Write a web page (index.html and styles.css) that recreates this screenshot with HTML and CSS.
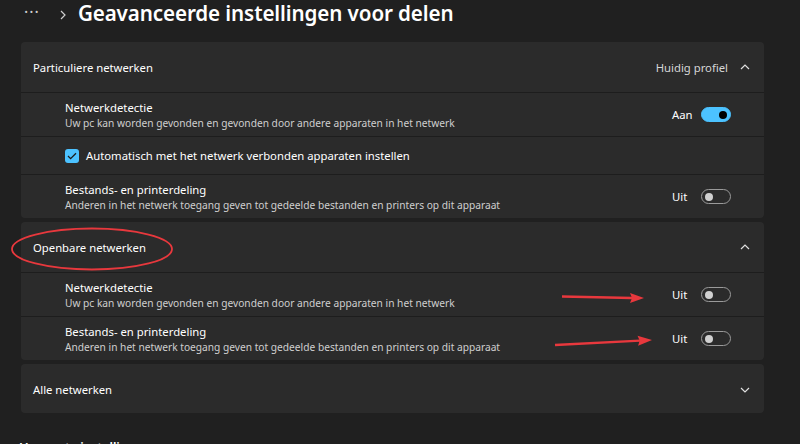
FILE: index.html
```html
<!DOCTYPE html>
<html lang="nl">
<head>
    <meta charset="UTF-8">
    <meta name="viewport" content="width=device-width, initial-scale=1.0">
    <title>Geavanceerde instellingen voor delen</title>
    <link rel="stylesheet" href="styles.css">
</head>
<body>

    <header class="page-header">
        <span class="more">&middot;&middot;&middot;</span>
        <svg class="crumb-chevron" width="8" height="10" viewBox="0 0 8 10"><path d="M2 1l4 4-4 4" fill="none" stroke="#cfcfcf" stroke-width="1.2"/></svg>
        <h1>Geavanceerde instellingen voor delen</h1>
    </header>

    <main class="content">

        <!-- Particuliere netwerken -->
        <section class="card">
            <div class="card-head">
                <span class="head-title">Particuliere netwerken</span>
                <span class="head-right">
                    <span class="head-note">Huidig profiel</span>
                    <svg class="chev" width="10" height="6" viewBox="0 0 10 6"><path d="M1 5l4-4 4 4" fill="none" stroke="#e0e0e0" stroke-width="1.2"/></svg>
                </span>
            </div>
            <div class="row">
                <div class="row-text">
                    <div class="row-title">Netwerkdetectie</div>
                    <div class="row-sub">Uw pc kan worden gevonden en gevonden door andere apparaten in het netwerk</div>
                </div>
                <div class="switch-wrap">
                    <span class="switch-label">Aan</span>
                    <span class="switch on"></span>
                </div>
            </div>
            <div class="row row-check">
                <span class="checkbox">
                    <svg width="10" height="8" viewBox="0 0 10 8"><path d="M1 4l2.6 2.6L9 1.2" fill="none" stroke="#1b1b1b" stroke-width="1.3"/></svg>
                </span>
                <span class="check-text">Automatisch met het netwerk verbonden apparaten instellen</span>
            </div>
            <div class="row">
                <div class="row-text">
                    <div class="row-title">Bestands- en printerdeling</div>
                    <div class="row-sub">Anderen in het netwerk toegang geven tot gedeelde bestanden en printers op dit apparaat</div>
                </div>
                <div class="switch-wrap">
                    <span class="switch-label">Uit</span>
                    <span class="switch"></span>
                </div>
            </div>
        </section>

        <!-- Openbare netwerken -->
        <section class="card">
            <div class="card-head">
                <span class="head-title">Openbare netwerken</span>
                <span class="head-right">
                    <svg class="chev" width="10" height="6" viewBox="0 0 10 6"><path d="M1 5l4-4 4 4" fill="none" stroke="#e0e0e0" stroke-width="1.2"/></svg>
                </span>
            </div>
            <div class="row">
                <div class="row-text">
                    <div class="row-title">Netwerkdetectie</div>
                    <div class="row-sub">Uw pc kan worden gevonden en gevonden door andere apparaten in het netwerk</div>
                </div>
                <div class="switch-wrap">
                    <span class="switch-label">Uit</span>
                    <span class="switch"></span>
                </div>
            </div>
            <div class="row">
                <div class="row-text">
                    <div class="row-title">Bestands- en printerdeling</div>
                    <div class="row-sub">Anderen in het netwerk toegang geven tot gedeelde bestanden en printers op dit apparaat</div>
                </div>
                <div class="switch-wrap">
                    <span class="switch-label">Uit</span>
                    <span class="switch"></span>
                </div>
            </div>
        </section>

        <!-- Alle netwerken -->
        <section class="card">
            <div class="card-head card-head-single">
                <span class="head-title">Alle netwerken</span>
                <span class="head-right">
                    <svg class="chev" width="10" height="6" viewBox="0 0 10 6"><path d="M1 1l4 4 4-4" fill="none" stroke="#e0e0e0" stroke-width="1.2"/></svg>
                </span>
            </div>
        </section>

        <h2 class="section-title">Verwante instellingen</h2>
    </main>

    <!-- Rode markeringen over de schermafbeelding -->
    <svg class="marks" width="800" height="444" viewBox="0 0 800 444">
        <ellipse cx="92" cy="249" rx="80" ry="20.5" fill="none" stroke="#e8383d" stroke-width="1.8"/>
        <path d="M562 296.5L632 298" stroke="#e8383d" stroke-width="2.4" fill="none"/>
        <path d="M644 298l-14-5 2 5-2 5z" fill="#e8383d"/>
        <path d="M555 345L640 340.6" stroke="#e8383d" stroke-width="2.4" fill="none"/>
        <path d="M652 340l-14.5-4.2 2.2 4.8-1.6 5.2z" fill="#e8383d"/>
    </svg>

</body>
</html>
```

FILE: styles.css
```css
/* Algemeen */
body {
    margin: 0;
    background-color: #202020;
    color: #ffffff;
    font-family: "Noto Sans", "Open Sans", sans-serif;
    height: 444px;
    overflow: hidden;
}

/* Kop van de pagina */
.page-header {
    display: flex;
    align-items: center;
    height: 30px;
    padding: 0 0 0 24px;
}

.more {
    font-size: 16px;
    color: #cfcfcf;
    letter-spacing: 1px;
    margin-right: 19px;
    line-height: 1;
    position: relative;
    top: -3px;
}

.crumb-chevron {
    margin-right: 11px;
}

.page-header h1 {
    margin: 0;
    font-size: 20.6px;
    font-weight: 600;
    letter-spacing: -0.1px;
    position: relative;
    top: -2px;
}

/* Inhoud */
.content {
    padding: 12px 36px 0 21px;
}

.card {
    background-color: #2b2b2b;
    border-radius: 4px;
    margin-bottom: 4px;
}

.card-head {
    display: flex;
    align-items: center;
    justify-content: space-between;
    height: 50px;
    padding: 0 14px 0 12px;
    font-size: 11.3px;
}

.card-head-single {
    height: 49px;
    padding-top: 2px;
    box-sizing: border-box;
}

.head-right {
    display: flex;
    align-items: center;
    gap: 12px;
}

.head-note {
    color: #d6d6d6;
}

.row {
    display: flex;
    align-items: center;
    justify-content: space-between;
    height: 43px;
    padding: 0 33px 0 44px;
    border-top: 1px solid #1d1d1d;
}

.row-check {
    justify-content: flex-start;
    height: 37px;
}

.row-title {
    font-size: 11.3px;
    line-height: 16px;
}

.row-sub {
    font-size: 10.2px;
    line-height: 14px;
    color: #cfcfcf;
}

.checkbox {
    display: flex;
    align-items: center;
    justify-content: center;
    width: 14px;
    height: 14px;
    border-radius: 3px;
    background-color: #4cc2ff;
    margin-right: 7px;
}

.check-text {
    font-size: 11.3px;
}

/* Schakelaar */
.switch-wrap {
    display: flex;
    align-items: center;
}

.switch-label {
    width: 29px;
    font-size: 11.3px;
}

.switch {
    position: relative;
    box-sizing: border-box;
    width: 30px;
    height: 15px;
    border-radius: 8px;
    border: 1px solid #9a9a9a;
}

.switch::after {
    content: "";
    position: absolute;
    top: 2.5px;
    left: 3px;
    width: 8px;
    height: 8px;
    border-radius: 50%;
    background-color: #d0d0d0;
}

.switch.on {
    background-color: #4cc2ff;
    border-color: #4cc2ff;
}

.switch.on::after {
    left: auto;
    right: 3px;
    background-color: #000000;
}

.section-title {
    margin: 26px 0 0 -1px;
    font-size: 12.2px;
    font-weight: 600;
}

/* Markeringen */
.marks {
    position: absolute;
    top: 0;
    left: 0;
    pointer-events: none;
}
```
